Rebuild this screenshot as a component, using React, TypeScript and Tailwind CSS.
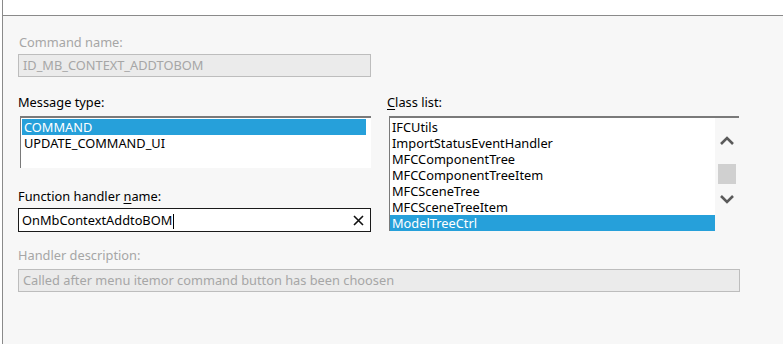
import React from 'react';

const classes = [
  'IFCUtils',
  'ImportStatusEventHandler',
  'MFCComponentTree',
  'MFCComponentTreeItem',
  'MFCSceneTree',
  'MFCSceneTreeItem',
  'ModelTreeCtrl',
];

const font = "font-['Noto_Sans',sans-serif]";

const Chevron: React.FC<{ down?: boolean }> = ({ down }) => (
  <svg width="16" height="12" viewBox="0 0 16 12" className="block">
    <path
      d={down ? 'M2 3 L8 9 L14 3' : 'M2 9 L8 3 L14 9'}
      fill="none"
      stroke="#5a5a5a"
      strokeWidth="2.6"
    />
  </svg>
);

const App: React.FC = () => {
  return (
    <div className={`w-[783px] h-[344px] overflow-hidden bg-white ${font} text-[12.8px] leading-[16px] text-black`}>
      <div className="h-[15px] ml-[2px] border-l border-[#8a8a8a] bg-white" />
      <div className="h-[329px] ml-[2px] border-l border-t border-[#8a8a8a] bg-[#f7f7f7] pl-[15px] pt-[18px]">
        {/* Command name */}
        <div className="text-[#a6a6a6] h-[16px] pl-[1px]">Command name:</div>
        <div className="mt-[4px] w-[353px] h-[23px] border border-[#bdbdbd] bg-[#ebebeb] text-[#a6a6a6] pl-[4px] leading-[21px]">
          ID_MB_CONTEXT_ADDTOBOM
        </div>

        <div className="mt-[17px] flex">
          {/* Left column */}
          <div className="w-[369px]">
            <div className="h-[16px]">Message type:</div>
            <div className="mt-[6px] ml-[2px] w-[351px] h-[52px] border-t-2 border-l border-[#7a7a7a] bg-white pt-[1px] pl-[1px]">
              <div className="h-[16px] w-[344px] bg-[#26a0da] text-white pl-[2px] leading-[16px]">COMMAND</div>
              <div className="h-[16px] pl-[2px] leading-[16px]">UPDATE_COMMAND_UI</div>
            </div>

            <div className="mt-[20px] h-[16px]">
              Function handler <span className="underline underline-offset-2">n</span>ame:
            </div>
            <div className="mt-[4px] w-[353px] h-[24px] border border-[#1a1a1a] bg-white flex items-center pl-[3px] pr-[6px]">
              <span className="flex-1 leading-[22px]">
                OnMbContextAddtoBOM<span className="inline-block w-px h-[15px] bg-black align-middle ml-px" />
              </span>
              <svg width="11" height="11" viewBox="0 0 11 11">
                <path d="M1 1 L10 10 M10 1 L1 10" stroke="#111" strokeWidth="1.6" />
              </svg>
            </div>
          </div>

          {/* Class list */}
          <div className="w-[352px]">
            <div className="h-[16px]">
              <span className="underline underline-offset-2">C</span>lass list:
            </div>
            <div className="mt-[6px] ml-[2px] w-[350px] h-[115px] border-t-2 border-l border-[#7a7a7a] flex">
              <div className="w-[325px] bg-white pt-[1px]">
                {classes.map((c) => (
                  <div
                    key={c}
                    className={`h-[16px] pl-[2px] leading-[16px] ${
                      c === 'ModelTreeCtrl' ? 'bg-[#26a0da] text-white' : ''
                    }`}
                  >
                    {c}
                  </div>
                ))}
              </div>
              <div className="flex-1 bg-[#f7f7f7] flex flex-col items-center pt-[17px]">
                <Chevron />
                <div className="mt-[17px] w-[18px] h-[20px] bg-[#d0d0d0]" />
                <div className="mt-[9px]">
                  <Chevron down />
                </div>
              </div>
            </div>
          </div>
        </div>

        {/* Handler description */}
        <div className="mt-[15px] h-[16px] text-[#a6a6a6]">Handler description:</div>
        <div className="mt-[6px] w-[722px] h-[23px] border border-[#bdbdbd] bg-[#ebebeb] text-[#a6a6a6] pl-[4px] leading-[21px]">
          Called after menu itemor command button has been choosen
        </div>
      </div>
    </div>
  );
};

export default App;
